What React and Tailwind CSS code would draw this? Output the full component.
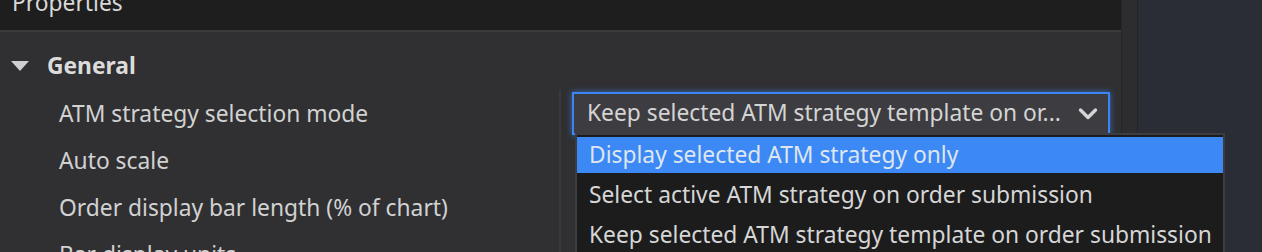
import React from 'react';

const rows = [
    'ATM strategy selection mode',
    'Auto scale',
    'Order display bar length (% of chart)',
    'Bar display units',
];

const options = [
    'Display selected ATM strategy only',
    'Select active ATM strategy on order submission',
    'Keep selected ATM strategy template on order submission',
];

const Chevron = () => (
    <svg width="20" height="14" viewBox="0 0 20 14" className="shrink-0">
        <path d="M2.5 3 L10 10.5 L17.5 3" fill="none" stroke="#d6d6d6" strokeWidth="3.4" strokeLinecap="round" strokeLinejoin="round" />
    </svg>
);

export default function App() {
    return (
        <div
            className="relative w-[1262px] h-[252px] overflow-hidden flex bg-[#2a2d35] text-[22.8px] text-[#d2d2d2]"
            style={{ fontFamily: '"Noto Sans", "Open Sans", sans-serif' }}
        >
            {/* properties panel */}
            <div className="w-[1121px] shrink-0 flex flex-col overflow-hidden bg-[#303032]">
                <div className="h-[32px] shrink-0 bg-[#1e1e1e] border-b-2 border-[#3b3b3d] px-3 overflow-hidden">
                    <div className="leading-[30px] mt-[-12px] text-[#d8d8d8]">Properties</div>
                </div>

                <div className="shrink-0 flex items-center h-[58px] pt-[10px] pl-[11px]">
                    <svg width="18" height="10" viewBox="0 0 18 10" className="shrink-0">
                        <path d="M0 0 H18 L9 10 Z" fill="#d0d0d0" />
                    </svg>
                    <span className="ml-[18px] font-bold text-[#dcdcdc]">General</span>
                </div>

                <div className="shrink-0">
                    {rows.map((label, i) => (
                        <div key={label} className="flex h-[47px]">
                            <div className="w-[559px] shrink-0 pl-[59px] pt-[2px] flex items-center whitespace-nowrap">{label}</div>
                            <div className="w-[2px] bg-[#3a3a3c]" />
                            <div className="flex-1 flex items-center pl-[11px] pr-[11px]">
                                {i === 0 && (
                                    <div className="w-full h-[43px] flex items-center justify-between pl-[13px] pr-[10px] bg-[#3d3c41] border-2 border-[#3c86f4] shadow-[0_0_6px_rgba(60,134,244,0.7)]">
                                        <span className="text-[#d4d4d4] whitespace-nowrap">Keep selected ATM strategy template on or...</span>
                                        <Chevron />
                                    </div>
                                )}
                            </div>
                        </div>
                    ))}
                </div>
            </div>

            {/* scroll strip */}
            <div className="w-[17px] shrink-0 bg-[#2d2d2f] border-x border-[#252527]" />

            {/* dropdown list */}
            <div className="absolute left-[575px] top-[133px] w-[650px] h-[140px] bg-[#1c1c1d] border-2 border-[#3c3d42] pt-[2px]">
                {options.map((opt, i) => (
                    <div
                        key={opt}
                        className={`h-[36px] mb-[4px] flex items-center pl-[12px] whitespace-nowrap ${i === 0 ? 'bg-[#3c89f5] text-[#dfe6f0]' : 'text-[#d6d6d6]'}`}
                    >
                        {opt}
                    </div>
                ))}
            </div>
        </div>
    );
}
